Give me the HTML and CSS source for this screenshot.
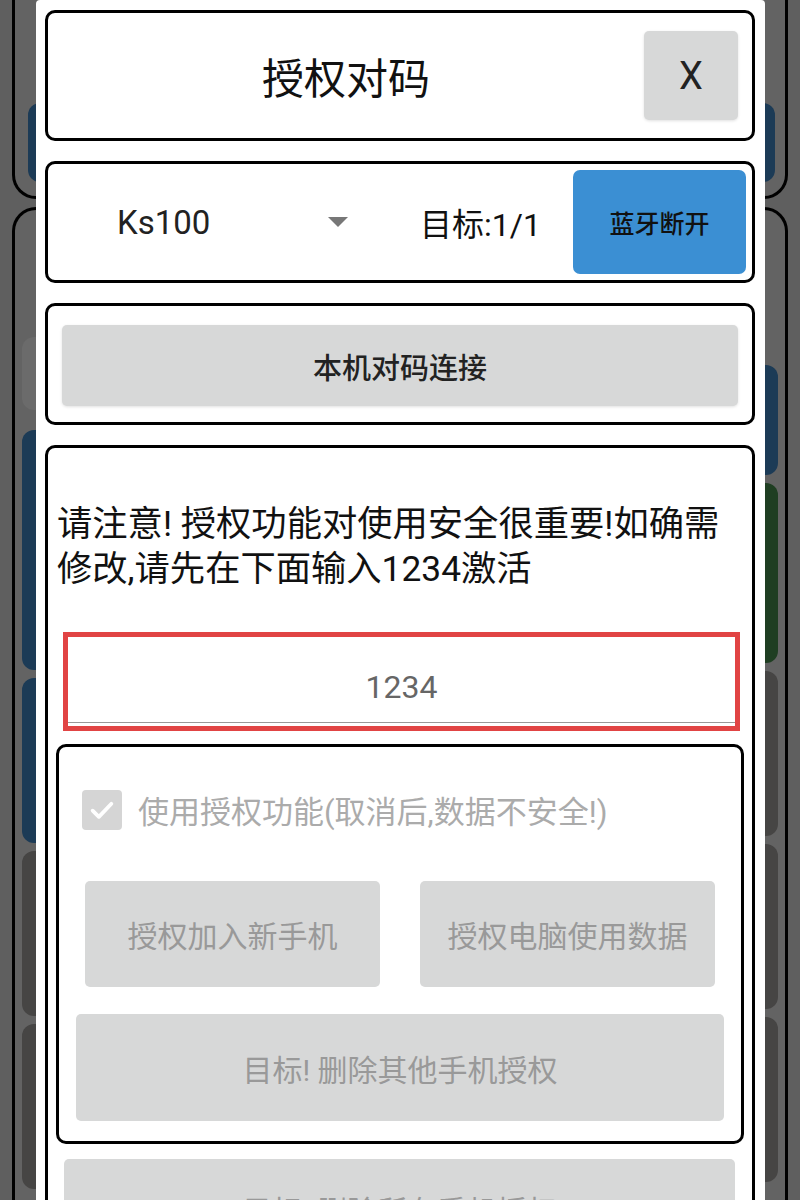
FILE: index.html
```html
<!DOCTYPE html>
<html lang="zh-CN">
<head>
  <meta charset="UTF-8" />
  <meta name="viewport" content="width=device-width, initial-scale=1.0"/>
  <title>授权对码</title>
  <link rel="stylesheet" href="styles.css">
</head>
<body>

  <!-- Page derrière la boîte de dialogue (assombrie) -->
  <div class="page">
    <div class="panel panel-top">
      <div class="tile tile-blue tile-wide"></div>
    </div>
    <div class="panel panel-main">
      <div class="col col-left">
        <div class="tile tile-grey t-short"></div>
        <div class="tile tile-blue t-tall"></div>
        <div class="tile tile-blue t-mid"></div>
        <div class="tile tile-dark t-mid"></div>
        <div class="tile tile-dark t-mid"></div>
      </div>
      <div class="col col-right">
        <div class="tile tile-blue t-right1"></div>
        <div class="tile tile-green t-right2"></div>
        <div class="tile tile-dark t-mid"></div>
        <div class="tile tile-dark t-mid"></div>
        <div class="tile tile-dark t-mid"></div>
      </div>
    </div>
  </div>

  <!-- Boîte de dialogue -->
  <div class="dialog">

    <div class="box box-title">
      <h1 class="title">授权对码</h1>
      <button class="btn btn-close">X</button>
    </div>

    <div class="box box-device">
      <div class="spinner">
        <span class="spinner-value">Ks100</span>
        <span class="spinner-arrow"></span>
      </div>
      <span class="target">目标:1/1</span>
      <button class="btn btn-blue">蓝牙断开</button>
    </div>

    <div class="box box-connect">
      <button class="btn btn-grey btn-connect">本机对码连接</button>
    </div>

    <div class="box box-auth">
      <p class="notice">请注意! 授权功能对使用安全很重要!如确需修改,请先在下面输入1234激活</p>

      <div class="code-input">
        <span class="code-value">1234</span>
      </div>

      <div class="box box-options">
        <label class="check-row">
          <span class="checkbox">
            <svg viewBox="0 0 24 24" width="30" height="30">
              <path d="M4.5 12.5l5 5 10-10.5" fill="none" stroke="#fff" stroke-width="3" stroke-linecap="round" stroke-linejoin="round"/>
            </svg>
          </span>
          <span class="check-label">使用授权功能(取消后,数据不安全!)</span>
        </label>

        <div class="btn-row">
          <button class="btn btn-grey btn-off">授权加入新手机</button>
          <button class="btn btn-grey btn-off">授权电脑使用数据</button>
        </div>

        <button class="btn btn-grey btn-off btn-wide">目标! 删除其他手机授权</button>
      </div>

      <button class="btn btn-grey btn-off btn-last">目标! 删除所有手机授权</button>
    </div>

  </div>

</body>
</html>
```

FILE: styles.css
```css
* {
  margin: 0;
  padding: 0;
  box-sizing: border-box;
}
body {
  font-family: Roboto, "Noto Sans CJK SC", sans-serif;
  background: #5f5f5f;
  color: #111;
  width: 800px;
  height: 1200px;
  overflow: hidden;
  position: relative;
}

/* Page assombrie */
.page {
  padding: 0 12px;
  display: flex;
  flex-direction: column;
  gap: 8px;
}
.panel {
  border: 3px solid #000;
  background: #636363;
  flex-shrink: 0;
}
.panel-top {
  height: 199px;
  border-top: none;
  border-radius: 0 0 24px 24px;
  padding: 103px 10px 0 13px;
}
.panel-main {
  height: 1100px;
  border-bottom: none;
  border-radius: 24px 24px 0 0;
  display: flex;
  justify-content: space-between;
  padding: 0 7px;
}
.col {
  width: 340px;
  display: flex;
  flex-direction: column;
  gap: 8px;
}
.col-left { padding-top: 127px; }
.col-right { padding-top: 155px; }
.col-left .t-short { margin-bottom: 12px; }

.tile {
  border-radius: 12px;
  flex-shrink: 0;
}
.tile-wide { height: 79px; }
.tile-blue { background: #1c3b56; }
.tile-grey { background: #6b6b6b; }
.tile-green { background: #1f3e22; }
.tile-dark { background: #464544; }
.t-short { height: 73px; }
.t-tall { height: 240px; }
.t-mid { height: 165px; }
.t-right1 { height: 110px; }
.t-right2 { height: 180px; }

/* Boîte de dialogue */
.dialog {
  position: absolute;
  top: 0;
  left: 36px;
  width: 729px;
  height: 1230px;
  background: #fff;
  border-radius: 4px;
  padding: 10px 10px 0 9px;
  display: flex;
  flex-direction: column;
  gap: 20px;
  overflow: hidden;
}

.box {
  border: 3px solid #000;
  border-radius: 10px;
  background: #fff;
  flex-shrink: 0;
}

.btn {
  font-family: inherit;
  border: none;
  border-radius: 5px;
  cursor: pointer;
  flex-shrink: 0;
}
.btn-grey {
  background: #d7d8d8;
  color: #222;
  box-shadow: 0 1px 3px rgba(0, 0, 0, 0.12);
}

/* Titre */
.box-title {
  height: 131px;
  display: flex;
  align-items: center;
  padding-right: 14px;
}
.title {
  flex: 1;
  text-align: center;
  font-size: 42px;
  font-weight: 400;
  color: #111;
}
.btn-close {
  width: 94px;
  height: 89px;
  background: #d7d8d8;
  color: #222;
  font-family: Roboto, sans-serif;
  font-size: 38px;
  box-shadow: 0 1px 3px rgba(0, 0, 0, 0.12);
}

/* Appareil */
.box-device {
  height: 122px;
  display: flex;
  align-items: center;
  padding-right: 6px;
}
.spinner {
  width: 315px;
  display: flex;
  align-items: center;
  padding-left: 69px;
}
.spinner-value {
  flex: 1;
  font-size: 33px;
  color: #222;
}
.spinner-arrow {
  width: 0;
  height: 0;
  border-left: 10px solid transparent;
  border-right: 10px solid transparent;
  border-top: 10px solid #777;
  margin-right: 15px;
}
.target {
  flex: 1;
  padding-left: 57px;
  font-size: 32px;
  color: #111;
}
.btn-blue {
  width: 173px;
  height: 104px;
  background: #3b8fd3;
  color: #111;
  font-size: 25px;
  font-weight: 500;
  border-radius: 7px;
}

/* Connexion */
.box-connect {
  height: 122px;
  padding: 19px 14px 0;
}
.btn-connect {
  width: 100%;
  height: 81px;
  font-size: 29px;
  font-weight: 500;
}

/* Autorisation */
.box-auth {
  flex: 1 0 auto;
  border-bottom: none;
  border-radius: 10px 10px 0 0;
  padding-top: 54px;
  display: flex;
  flex-direction: column;
}
.notice {
  padding: 0 6px 0 9px;
  font-size: 35.3px;
  line-height: 45px;
  color: #111;
}
.code-input {
  margin: 40px 12px 0 15px;
  height: 99px;
  padding-top: 10px;
  border: 5px solid #e14444;
  display: flex;
  align-items: center;
  justify-content: center;
  position: relative;
  flex-shrink: 0;
}
.code-input::after {
  content: "";
  position: absolute;
  left: 0;
  right: 0;
  bottom: 3px;
  height: 1px;
  background: #999;
}
.code-value {
  font-size: 32px;
  color: #666;
}

.box-options {
  margin: 13px 8px 0;
  display: flex;
  flex-direction: column;
}
.check-row {
  display: flex;
  align-items: center;
  gap: 16px;
  margin: 40px 0 0 23px;
}
.checkbox {
  width: 40px;
  height: 40px;
  border-radius: 4px;
  background: #d5d5d5;
  display: flex;
  align-items: center;
  justify-content: center;
}
.check-label {
  font-size: 31px;
  color: #ababab;
}
.btn-row {
  display: flex;
  gap: 40px;
  padding: 0 26px;
  margin-top: 49px;
}
.btn-off {
  color: #999;
  font-size: 30px;
  box-shadow: none;
}
.btn-row .btn {
  flex: 1;
  height: 106px;
}
.btn-wide {
  height: 107px;
  margin: 27px 17px 20px;
}
.btn-last {
  height: 100px;
  margin: 15px 17px 0 16px;
}
```
